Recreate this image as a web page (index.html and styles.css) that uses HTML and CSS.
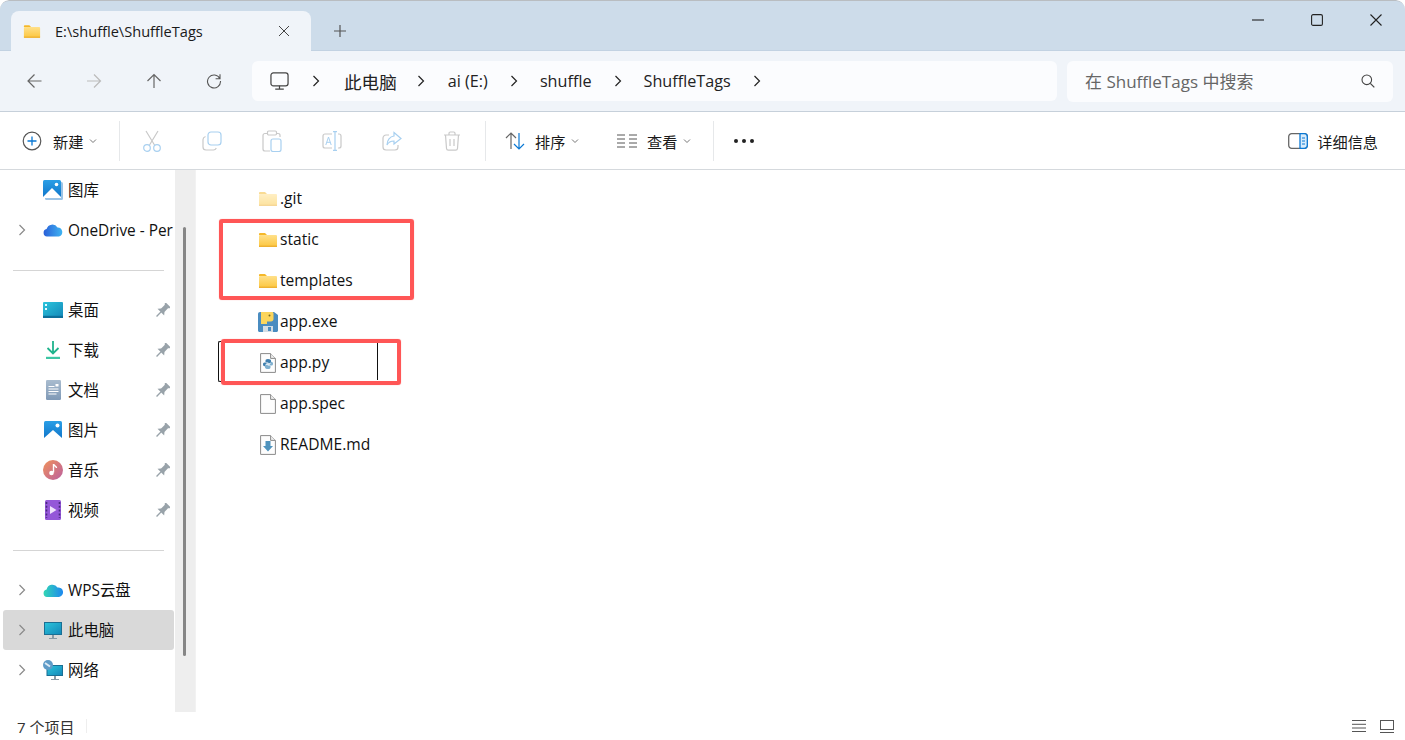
FILE: index.html
```html
<!DOCTYPE html>
<html lang="zh-CN">
<head>
<meta charset="utf-8">
<title>E:\shuffle\ShuffleTags</title>
<link rel="stylesheet" href="styles.css">
</head>
<body>
<svg class="sprite" xmlns="http://www.w3.org/2000/svg">
  <defs>
    <linearGradient id="gFolder" x1="0" y1="0" x2="0" y2="1"><stop offset="0" stop-color="#ffe08a"/><stop offset="1" stop-color="#fcc63e"/></linearGradient>
    <linearGradient id="gBlue" x1="0" y1="0" x2="0" y2="1"><stop offset="0" stop-color="#2b9fe6"/><stop offset="1" stop-color="#0f74c9"/></linearGradient>
    <linearGradient id="gDesk" x1="0" y1="0" x2="1" y2="1"><stop offset="0" stop-color="#2cc5dc"/><stop offset="1" stop-color="#1387b8"/></linearGradient>
    <linearGradient id="gCloud" x1="0" y1="0" x2="1" y2="0"><stop offset="0" stop-color="#2a5fd8"/><stop offset="1" stop-color="#3fb4f2"/></linearGradient>
    <linearGradient id="gWps" x1="0" y1="0" x2="1" y2="0"><stop offset="0" stop-color="#32d6b4"/><stop offset="1" stop-color="#1e88f0"/></linearGradient>
    <linearGradient id="gDoc" x1="0" y1="0" x2="0" y2="1"><stop offset="0" stop-color="#a9bccf"/><stop offset="1" stop-color="#7f99b6"/></linearGradient>
    <linearGradient id="gMusic" x1="0" y1="0" x2="1" y2="1"><stop offset="0" stop-color="#f0925a"/><stop offset="1" stop-color="#bb5fa0"/></linearGradient>
    <symbol id="folder" viewBox="0 0 20 16">
      <path d="M1 2.200C1 1.500 1.500 1 2.200 1H7l2 2h-8z" fill="#f5b82a"/>
      <rect x="1" y="3" width="18" height="12" rx="1" fill="url(#gFolder)"/>
      <rect x="1" y="13.600" width="18" height="1.400" fill="#eeb132"/>
    </symbol>
    <symbol id="chev" viewBox="0 0 12 12"><path d="M3.500 1 8.500 6 3.500 11" fill="none" stroke="currentColor" stroke-width="1.200"/></symbol>
    <symbol id="down" viewBox="0 0 10 10"><path d="M2 3.500 5 6.500 8 3.500" fill="none" stroke="#777" stroke-width="1"/></symbol>
    <symbol id="pin" viewBox="0 0 16 16"><g transform="rotate(45 8 8)" fill="#98a2a9"><rect x="4.500" y="-.5" width="7" height="2.200" rx=".6"/><rect x="5.500" y="1.500" width="5" height="6.500"/><path d="M5.500 7.500h5l2.500 3H3z"/><rect x="7.300" y="10" width="1.400" height="7"/></g></symbol>
    <symbol id="doc" viewBox="0 0 16 20"><path d="M.6.600h10l4.800 4.800v14H.6z" fill="#fdfdfd" stroke="#8a8a8a"/><path d="M10.600.6v4.800h4.800" fill="#eee" stroke="#8a8a8a"/></symbol>
    <symbol id="mon" viewBox="0 0 20 20"><rect x="1" y="1" width="18" height="13.500" rx="2.500" fill="none" stroke="currentColor" stroke-width="1.300"/><path d="M10 14.500v3.500M5.500 18h9" fill="none" stroke="currentColor" stroke-width="1.300"/></symbol>
  </defs>
</svg>

<div class="window">
  <header class="titlebar">
    <div class="tab">
      <svg class="tab-folder"><use href="#folder"/></svg>
      <span class="tab-title">E:\shuffle\ShuffleTags</span>
      <svg class="tab-close" viewBox="0 0 12 12"><path d="M1 1l10 10M11 1 1 11" stroke="#444" stroke-width="1"/></svg>
    </div>
    <svg class="tab-plus" viewBox="0 0 12 12"><path d="M6 0v12M0 6h12" stroke="#555" stroke-width="1.200"/></svg>
    <div class="winctl">
      <div class="winbtn"><svg width="12" height="12" viewBox="0 0 12 12"><path d="M0 6h12" stroke="#222" stroke-width="1.100"/></svg></div>
      <div class="winbtn"><svg width="12" height="12" viewBox="0 0 12 12"><rect x=".6" y=".6" width="10.800" height="10.800" rx="1.500" fill="none" stroke="#222" stroke-width="1.100"/></svg></div>
      <div class="winbtn"><svg width="12" height="12" viewBox="0 0 12 12"><path d="M.5.500l11 11M11.500.500l-11 11" stroke="#222" stroke-width="1.100"/></svg></div>
    </div>
  </header>

  <nav class="navbar">
    <div class="navbtns">
      <div class="navbtn"><svg width="16" height="16" viewBox="0 0 16 16"><path d="M15.500 8H2M8.500 1.500 2 8 8.500 14.500" fill="none" stroke="#666" stroke-width="1.200"/></svg></div>
      <div class="navbtn"><svg width="16" height="16" viewBox="0 0 16 16"><path d="M1 8h13.500M8 1.500 14.500 8 8 14.500" fill="none" stroke="#bbb" stroke-width="1.200"/></svg></div>
      <div class="navbtn"><svg width="16" height="16" viewBox="0 0 16 16"><path d="M8 15V1.500M1.500 8 8 1.500 14.500 8" fill="none" stroke="#666" stroke-width="1.200"/></svg></div>
      <div class="navbtn"><svg width="16" height="16" viewBox="0 0 16 16"><path d="M13.800 5.500A6.500 6.500 0 1 0 14.500 8M14 1.300v4.400H9.600" fill="none" stroke="#555" stroke-width="1.100"/></svg></div>
    </div>
    <div class="address">
      <svg class="addr-mon"><use href="#mon"/></svg>
      <svg class="addr-chev first"><use href="#chev"/></svg>
      <span class="crumb crumb-cjk">此电脑</span>
      <svg class="addr-chev"><use href="#chev"/></svg>
      <span class="crumb crumb-drive">ai (E:)</span>
      <svg class="addr-chev"><use href="#chev"/></svg>
      <span class="crumb">shuffle</span>
      <svg class="addr-chev"><use href="#chev"/></svg>
      <span class="crumb">ShuffleTags</span>
      <svg class="addr-chev"><use href="#chev"/></svg>
    </div>
    <div class="search">
      <span class="search-text">在 ShuffleTags 中搜索</span>
      <svg width="14" height="14" viewBox="0 0 14 14"><circle cx="5.800" cy="5.800" r="4.800" fill="none" stroke="#444" stroke-width="1.100"/><path d="M9.300 9.300 13.300 13.300" stroke="#444" stroke-width="1.200"/></svg>
    </div>
  </nav>

  <section class="toolbar">
    <div class="tb-new">
      <svg width="20" height="20" viewBox="0 0 20 20"><circle cx="10" cy="10" r="8.800" fill="none" stroke="#555" stroke-width="1.200"/><path d="M10 5.500v9M5.500 10h9" stroke="#0a78d4" stroke-width="1.300"/></svg>
      <span class="tb-label">新建</span>
      <svg class="tb-down"><use href="#down"/></svg>
    </div>
    <div class="tb-sep"></div>
    <div class="tb-icons">
      <div class="tb-icon"><svg width="20" height="22" viewBox="0 0 20 22"><path d="M4 1l8.500 14M16 1 7.500 15" fill="none" stroke="#c9c9c9" stroke-width="1.200"/><circle cx="5" cy="18" r="3.300" fill="none" stroke="#a8d0f0" stroke-width="1.200"/><circle cx="15" cy="18" r="3.300" fill="none" stroke="#a8d0f0" stroke-width="1.200"/></svg></div>
      <div class="tb-icon"><svg width="20" height="20" viewBox="0 0 20 20"><path d="M3.500 5.500C2 6 1 7 1 8.500v7.500C1 18 2.300 19 4 19h7.500c1.300 0 2.300-.8 2.800-2" fill="none" stroke="#c9c9c9" stroke-width="1.200"/><rect x="6" y="1" width="13" height="13" rx="3" fill="none" stroke="#a8d0f0" stroke-width="1.200"/></svg></div>
      <div class="tb-icon"><svg width="20" height="22" viewBox="0 0 20 22"><path d="M5 3.500H3C1.800 3.500 1 4.300 1 5.500V19c0 1.200.8 2 2 2h5M15 3.500h1c1 0 2 .8 2 1.800V7" fill="none" stroke="#c9c9c9" stroke-width="1.200"/><rect x="5.500" y="1" width="9" height="4" rx="1.200" fill="none" stroke="#c9c9c9" stroke-width="1.200"/><rect x="9" y="9" width="10" height="12.500" rx="2" fill="none" stroke="#a8d0f0" stroke-width="1.200"/></svg></div>
      <div class="tb-icon"><svg width="20" height="20" viewBox="0 0 20 20"><path d="M10 3H3C1.800 3 1 3.800 1 5v10c0 1.200.8 2 2 2h7M16 3h1c1.200 0 2 .8 2 2v10c0 1.200-.8 2-2 2h-1" fill="none" stroke="#c9c9c9" stroke-width="1.200"/><path d="M11 .6h4M13 .6v18.800M11 19.400h4" fill="none" stroke="#a8d0f0" stroke-width="1.200"/><path d="M3.800 14 6.500 6l2.700 8M4.800 11.300h3.400" fill="none" stroke="#a8d0f0" stroke-width="1"/></svg></div>
      <div class="tb-icon"><svg width="20" height="20" viewBox="0 0 20 20"><path d="M7 4H4C2.500 4 1 5.200 1 7v9c0 1.800 1.500 3 3 3h9c1.700 0 3-1.300 3-3v-2" fill="none" stroke="#c9c9c9" stroke-width="1.200"/><path d="M12 1.500 19 7.500 12 13V10C9 10 6.500 11 5 14 5 9 8 5.500 12 5z" fill="none" stroke="#a8d0f0" stroke-width="1.200"/></svg></div>
      <div class="tb-icon"><svg width="18" height="20" viewBox="0 0 18 20"><path d="M1 4h16M6 4V2.300C6 1.500 6.500 1 7.300 1h3.400c.8 0 1.300.5 1.300 1.300V4M2.500 4l1 13.500c.1 1 .8 1.700 1.800 1.700h7.400c1 0 1.700-.7 1.800-1.700L15.500 4M7 8v7M11 8v7" fill="none" stroke="#c9c9c9" stroke-width="1.200"/></svg></div>
    </div>
    <div class="tb-sep"></div>
    <div class="tb-sort">
      <svg width="20" height="18" viewBox="0 0 20 18"><path d="M6 17V1M1 6l5-5 5 5" fill="none" stroke="#666" stroke-width="1.200"/><path d="M14 1v16M9 12l5 5 5-5" fill="none" stroke="#0a78d4" stroke-width="1.200"/></svg>
      <span class="tb-label">排序</span>
      <svg class="tb-down"><use href="#down"/></svg>
    </div>
    <div class="tb-view">
      <svg width="20" height="14" viewBox="0 0 20 14"><path d="M0 1h8M0 5h8M0 9h8M0 13h8M12 1h8M12 5h8M12 9h8M12 13h8" stroke="#555" stroke-width="1"/></svg>
      <span class="tb-label">查看</span>
      <svg class="tb-down"><use href="#down"/></svg>
    </div>
    <div class="tb-sep"></div>
    <div class="tb-more"><i></i><i></i><i></i></div>
    <div class="tb-details">
      <svg width="20" height="16" viewBox="0 0 20 16"><rect x=".7" y=".7" width="18.600" height="14.600" rx="3" fill="none" stroke="#666" stroke-width="1.300"/><path d="M12 .7h4.300c1.700 0 3 1.300 3 3v8.600c0 1.700-1.300 3-3 3H12z" fill="#d9ecfb" stroke="#0a78d4" stroke-width="1.300"/><path d="M14 5h3M14 8h3M14 11h3" stroke="#0a78d4"/></svg>
      <span class="tb-label">详细信息</span>
    </div>
  </section>

  <main class="body">
    <aside class="sidebar">
      <div class="side-item"><span class="side-chev"></span><span class="side-icon"><svg width="20" height="20" viewBox="0 0 20 20"><rect x="2" y="2" width="18" height="18" rx="1.500" fill="#9cc4e6"/><rect y="0" width="18" height="18" rx="1.500" fill="url(#gBlue)"/><path d="M0 17 9 8l9 9v1H0z" fill="#fff"/><circle cx="13.500" cy="4.500" r="1.800" fill="#fff"/></svg></span><span class="side-text">图库</span></div>
      <div class="side-item"><svg class="side-chev"><use href="#chev"/></svg><span class="side-icon"><svg width="20" height="14" viewBox="0 0 20 13"><path d="M4 13A3.800 3.800 0 0 1 3.600 5.500 6 6 0 0 1 14.500 4 4.600 4.600 0 0 1 16 13z" fill="url(#gCloud)"/></svg></span><span class="side-text side-latin">OneDrive - Per</span></div>
      <div class="side-sep"></div>
      <div class="side-item"><span class="side-chev"></span><span class="side-icon"><svg width="20" height="16" viewBox="0 0 20 16"><rect width="20" height="16" rx="1" fill="url(#gDesk)"/><rect x="2" y="2" width="2" height="2" fill="#e6fbff"/><rect x="2" y="6" width="2" height="2" fill="#e6fbff"/><rect y="13.800" width="20" height="2.200" fill="#0d6f9a"/></svg></span><span class="side-text">桌面</span><svg class="side-pin"><use href="#pin"/></svg></div>
      <div class="side-item"><span class="side-chev"></span><span class="side-icon"><svg width="16" height="18" viewBox="0 0 16 18"><path d="M8 0v12M2.500 7 8 12.500 13.500 7" fill="none" stroke="#20b38c" stroke-width="1.800"/><rect x="1" y="15.800" width="14" height="2.200" fill="#3dc6a4"/></svg></span><span class="side-text">下载</span><svg class="side-pin"><use href="#pin"/></svg></div>
      <div class="side-item"><span class="side-chev"></span><span class="side-icon"><svg width="15" height="20" viewBox="0 0 15 20"><rect width="15" height="20" rx="1.200" fill="url(#gDoc)"/><path d="M2.500 6.500h6M2.500 9h10M2.500 11.500h10M2.500 14h8" stroke="#fff"/><rect x="9.500" y="4" width="3" height="2.500" fill="#fff"/></svg></span><span class="side-text">文档</span><svg class="side-pin"><use href="#pin"/></svg></div>
      <div class="side-item"><span class="side-chev"></span><span class="side-icon"><svg width="18" height="18" viewBox="0 0 18 18"><rect width="18" height="18" rx="1.500" fill="url(#gBlue)"/><path d="M0 17 9 9l9 8v1H0z" fill="#fff"/><circle cx="13.500" cy="4.500" r="2" fill="#fff"/></svg></span><span class="side-text">图片</span><svg class="side-pin"><use href="#pin"/></svg></div>
      <div class="side-item"><span class="side-chev"></span><span class="side-icon"><svg width="20" height="20" viewBox="0 0 20 20"><circle cx="10" cy="10" r="10" fill="url(#gMusic)"/><path d="M10.500 4v8.500" stroke="#fff" stroke-width="1.400"/><path d="M10.500 4.500c1 1.500 3 1.500 3 3.500" fill="none" stroke="#fff" stroke-width="1.400"/><circle cx="8.500" cy="13" r="2.300" fill="#fff"/></svg></span><span class="side-text">音乐</span><svg class="side-pin"><use href="#pin"/></svg></div>
      <div class="side-item"><span class="side-chev"></span><span class="side-icon"><svg width="16" height="20" viewBox="0 0 16 20"><rect width="16" height="20" rx="1.500" fill="#9457d8"/><path d="M5 6v8l6.500-4z" fill="#efe2fb"/><path d="M1.500 2v16M14.500 2v16" stroke="#4a2a80" stroke-width="1.600" stroke-dasharray="2 1.800"/></svg></span><span class="side-text">视频</span><svg class="side-pin"><use href="#pin"/></svg></div>
      <div class="side-sep"></div>
      <div class="side-item"><svg class="side-chev"><use href="#chev"/></svg><span class="side-icon"><svg width="20" height="14" viewBox="0 0 20 14"><path d="M4 14A3.800 3.800 0 0 1 3.600 6.500 6 6 0 0 1 14.500 4.500 4.700 4.700 0 0 1 16 14z" fill="url(#gWps)"/></svg></span><span class="side-text">WPS云盘</span></div>
      <div class="side-item is-current"><svg class="side-chev"><use href="#chev"/></svg><span class="side-icon"><svg width="18" height="17" viewBox="0 0 18 17"><rect x=".5" y=".5" width="17" height="12" fill="url(#gDesk)" stroke="#1a6f94"/><path d="M9 13v3" stroke="#8a9aa5" stroke-width="2"/><path d="M5 16.500h8" stroke="#8a9aa5"/></svg></span><span class="side-text">此电脑</span></div>
      <div class="side-item"><svg class="side-chev"><use href="#chev"/></svg><span class="side-icon"><svg width="20" height="20" viewBox="0 0 20 20"><rect x="4" y="5.500" width="15.500" height="10" fill="url(#gDesk)" stroke="#1a6f94"/><circle cx="5" cy="5" r="5" fill="#5f9bc7"/><path d="M2 3l5 3.500" stroke="#dceaf5" stroke-width="2"/><path d="M12 16v3" stroke="#8a9aa5" stroke-width="2"/><path d="M8 19.500h8" stroke="#8a9aa5"/></svg></span><span class="side-text">网络</span></div>
    </aside>
    <div class="track"><div class="thumb"></div></div>
    <div class="files">
      <div class="ink ink-l"></div>
      <div class="ink ink-r"></div>
      <div class="file dim"><svg class="ficon"><use href="#folder"/></svg><span>.git</span></div>
      <div class="file"><svg class="ficon"><use href="#folder"/></svg><span>static</span></div>
      <div class="file"><svg class="ficon"><use href="#folder"/></svg><span>templates</span></div>
      <div class="file"><svg class="ficon ftall" viewBox="0 0 20 20"><path d="M2 0h14l4 3v15.500c0 .8-.7 1.500-1.500 1.500h-17C.7 20 0 19.300 0 18.500V2C0 .9.900 0 2 0z" fill="#4a8cc0"/><path d="M3 0h11c1 0 1.500.6 1.500 1.500V7c0 1.500-1 2.500-2.500 2.500H9V12H3z" fill="#fbd55c"/><rect x="5" y="14" width="10" height="6" fill="#d4dde4"/><rect x="10" y="15" width="3" height="4" fill="#4a8cc0"/><circle cx="11.500" cy="3.500" r="1" fill="#7a6a20"/></svg><span>app.exe</span></div>
      <div class="file"><svg class="ficon ftall" viewBox="0 0 16 20"><path d="M.6.600h10l4.800 4.800v14H.6z" fill="#fdfdfd" stroke="#8a8a8a"/><path d="M10.600.6v4.800h4.800" fill="#eee" stroke="#8a8a8a"/><path d="M8 6C6 6 5.500 6.800 5.500 7.800V9h2.800v.5H4.500c-1 0-1.500.8-1.500 1.800s.5 2 1.500 2h1V12c0-1 .8-1.800 1.800-1.800h2.500c.8 0 1.200-.5 1.200-1.200V7.800C11 6.800 10 6 8 6z" fill="#3f7fae"/><path d="M8 16c2 0 2.500-.8 2.500-1.800V13H7.700v-.5h3.800c1 0 1.500-.8 1.500-1.800s-.5-2-1.500-2h-1V10c0 1-.8 1.800-1.800 1.800H6.200c-.8 0-1.200.5-1.200 1.200v1.200C5 15.200 6 16 8 16z" fill="#7fb0cf"/></svg><span>app.py</span></div>
      <div class="file"><svg class="ficon ftall"><use href="#doc"/></svg><span>app.spec</span></div>
      <div class="file"><svg class="ficon ftall" viewBox="0 0 16 20"><path d="M.6.600h10l4.800 4.800v14H.6z" fill="#fdfdfd" stroke="#8a8a8a"/><path d="M10.600.6v4.800h4.800" fill="#eee" stroke="#8a8a8a"/><path d="M5.500 6h5v5h2.500L8 16.500 3 11h2.500z" fill="#4f93bd"/></svg><span>README.md</span></div>
      <div class="mark mark-a"></div>
      <div class="mark mark-b"></div>
    </div>
  </main>

  <footer class="statusbar">
    <span class="count">7 个项目</span>
    <span class="status-sep"></span>
    <div class="status-icons">
      <svg width="14" height="12" viewBox="0 0 14 12"><path d="M0 .5h14M0 4.300h14M0 8h14M0 11.500h14" stroke="#555"/></svg>
      <svg width="14" height="13" viewBox="0 0 14 13"><rect x=".5" y=".5" width="13" height="9" fill="none" stroke="#555"/><path d="M0 12.500h14" stroke="#555"/></svg>
    </div>
  </footer>
</div>
</body>
</html>
```

FILE: styles.css
```css
* { box-sizing: border-box; }
html, body { margin: 0; height: 100%; background: #fff; overflow: hidden; }
body { font-family: "Open Sans", "Noto Sans CJK SC", sans-serif; color: #1a1a1a; }
.sprite { display: block; width: 0; height: 0; }

.window { width: 1405px; height: 740px; display: flex; flex-direction: column; border-radius: 9px; overflow: hidden; background: #fff; }

/* title bar */
.titlebar { height: 51px; flex: none; background: #cddcea; border-top: 1px solid #b9bdc1; border-bottom: 1px solid #c2d2e2; display: flex; align-items: flex-end; padding-left: 11px; border-radius: 9px 9px 0 0; }
.tab { width: 300px; height: 40px; margin-bottom: -1px; background: #f0f4f9; border-radius: 8px 8px 0 0; display: flex; align-items: center; padding: 0 21px 0 12px; }
.tab-folder { width: 18px; height: 15px; flex: none; }
.tab-title { margin-left: 14px; font-size: 14.600px; flex: 1; white-space: nowrap; }
.tab-close { width: 12px; height: 12px; flex: none; }
.tab-plus { width: 12px; height: 12px; margin: 0 0 13px 23px; flex: none; }
.winctl { margin-left: auto; align-self: flex-start; display: flex; }
.winbtn { width: 59px; height: 38px; display: flex; align-items: center; justify-content: center; }

/* nav */
.navbar { height: 61px; flex: none; background: #f0f4f9; border-bottom: 1px solid #c6d0da; display: flex; align-items: center; padding: 0 12px 0 4px; }
.navbtns { display: flex; width: 248px; flex: none; }
.navbtn { width: 60px; display: flex; justify-content: center; }
.address { width: 805px; height: 40px; background: #fbfcfe; border-radius: 6px; display: flex; align-items: center; padding-left: 18px; font-size: 16.200px; color: #222; }
.addr-mon { width: 19px; height: 19px; color: #444; flex: none; }
.addr-chev { width: 12px; height: 12px; color: #222; flex: none; margin: 0 20px; }
.addr-chev.first { margin-left: 21px; margin-right: 22px; }
.crumb { white-space: nowrap; }
.crumb-cjk { font-size: 17.600px; margin-right: -2px; }
.crumb-drive { margin-left: 1px; }
.search { width: 326px; height: 41px; margin-left: 10px; background: #fbfcfe; border-radius: 6px; display: flex; align-items: center; justify-content: space-between; padding: 0 18px; color: #666; font-size: 17px; }
.search-text { white-space: nowrap; margin-bottom: 2px; }

/* toolbar */
.toolbar { height: 58px; flex: none; background: #fff; border-bottom: 1px solid #d5d9dd; display: flex; align-items: center; padding: 0 27px 0 22px; font-size: 15.200px; }
.toolbar > div { display: flex; align-items: center; }
.tb-label { white-space: nowrap; }
.tb-new { width: 97px; flex: none; }
.tb-new .tb-label { margin-left: 11px; }
.tb-down { width: 10px; height: 10px; margin-left: 5px; flex: none; }
.tb-sep { width: 1px; height: 40px; background: #e6e8ea; flex: none; }
.tb-icons { width: 365px; flex: none; padding-left: 2px; }
.tb-icon { width: 60px; display: flex; justify-content: center; }
.tb-sort { width: 112px; flex: none; padding-left: 19px; }
.tb-sort .tb-label, .tb-view .tb-label { margin-left: 10px; }
.tb-view { width: 115px; flex: none; padding-left: 19px; }
.tb-more { flex: none; gap: 4px; margin-left: 20px; }
.tb-more i { width: 4px; height: 4px; border-radius: 50%; background: #222; display: block; }
.tb-details { margin-left: auto; }
.tb-details .tb-label { margin-left: 9px; }

/* body */
.body { flex: 1; min-height: 0; display: flex; background: #fff; }
.sidebar { width: 175px; flex: none; padding-left: 3px; font-size: 15.400px; overflow: hidden; }
.side-item { height: 40px; width: 171px; display: flex; align-items: center; border-radius: 3px; white-space: nowrap; overflow: hidden; position: relative; }
.side-item.is-current { background: #d9d9d9; }
.side-chev { width: 12px; height: 12px; color: #8a8a8a; flex: none; margin-left: 13px; display: block; }
.side-icon { width: 20px; margin-left: 15px; display: flex; justify-content: center; align-items: center; flex: none; }
.side-text { margin-left: 5px; margin-bottom: 2px; flex: none; color: #111; }
.side-latin { margin-bottom: 0; }
.side-pin { width: 15px; height: 15px; position: absolute; right: 4px; top: 13px; }
.side-sep { height: 40px; display: flex; align-items: center; margin-left: 10px; width: 151px; }
.side-sep::before { content: ""; display: block; width: 100%; height: 1px; background: #d5d5d5; }
.track { width: 20px; flex: none; background: #eeeeee; padding-left: 8px; padding-top: 57px; }
.thumb { width: 3px; height: 429px; background: #868686; border-radius: 2px; }
.files { flex: 1; padding: 8px 0 0 62px; font-size: 15.600px; position: relative; border-left: 1px solid #f2f2f2; }
.file { height: 41px; display: flex; align-items: center; color: #111; }
.file span { margin-left: 2px; white-space: nowrap; margin-bottom: 1px; }
.ficon { width: 20px; height: 16px; flex: none; }
.ftall { height: 20px; }
.dim .ficon { opacity: .5; }

/* annotations drawn over the list */
.mark { position: absolute; border: 4px solid #ff5656; border-radius: 3px; box-shadow: 0 0 1px #ff8f8f; pointer-events: none; }
.mark-a { left: 23px; top: 49px; width: 195px; height: 81px; }
.mark-b { left: 25px; top: 169px; width: 180px; height: 46px; }
.ink { position: absolute; background: #111; width: 1px; }
.ink-l { left: 22px; top: 171px; height: 41px; width: 3px; background: none; border: 1px solid #111; border-right: 0; border-radius: 2px 0 0 2px; }
.ink-r { left: 181px; top: 173px; height: 37px; }

/* status bar */
.statusbar { height: 28px; flex: none; display: flex; align-items: center; padding: 0 11px 0 17px; font-size: 15px; color: #333; }
.count { white-space: nowrap; }
.status-sep { width: 1px; height: 14px; background: #eee; margin-left: 12px; }
.status-icons { margin-left: auto; display: flex; gap: 14px; align-items: center; }
```
